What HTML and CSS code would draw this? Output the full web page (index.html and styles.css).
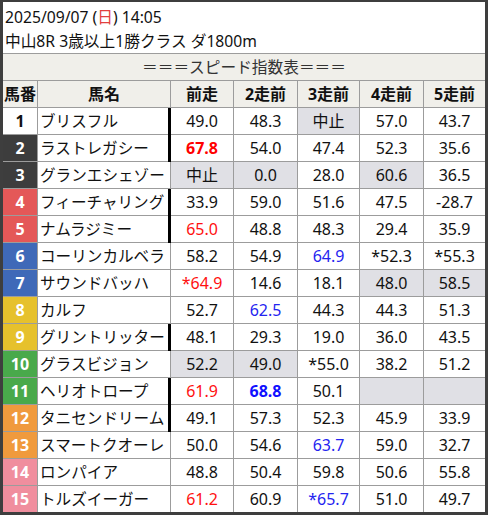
FILE: index.html
```html
<!DOCTYPE html>
<html lang="ja">
<head>
<meta charset="utf-8">
<link rel="stylesheet" href="styles.css">
</head>
<body>
<div class="frame">
  <div class="title">
    <div class="tline">2025/09/07 (<span class="sun">日</span>) 14:05</div>
    <div class="tline">中山8R 3歳以上1勝クラス ダ1800m</div>
  </div>
  <div class="grid">
    <div class="strip">＝＝＝スピード指数表＝＝＝</div>
    <div class="hd">馬番</div><div class="hd">馬名</div><div class="hd">前走</div><div class="hd">2走前</div><div class="hd">3走前</div><div class="hd">4走前</div><div class="hd">5走前</div>

    <div class="num w1">1</div><div class="name">ブリスフル</div><div class="c mark">49.0</div><div class="c">48.3</div><div class="c g">中止</div><div class="c">57.0</div><div class="c">43.7</div>
    <div class="num w2">2</div><div class="name">ラストレガシー</div><div class="c mark rb">67.8</div><div class="c">54.0</div><div class="c">47.4</div><div class="c">52.3</div><div class="c">35.6</div>
    <div class="num w2">3</div><div class="name">グランエシェゾー</div><div class="c g">中止</div><div class="c g">0.0</div><div class="c">28.0</div><div class="c g">60.6</div><div class="c">36.5</div>
    <div class="num w3">4</div><div class="name">フィーチャリング</div><div class="c mark">33.9</div><div class="c">59.0</div><div class="c">51.6</div><div class="c">47.5</div><div class="c">-28.7</div>
    <div class="num w3">5</div><div class="name">ナムラジミー</div><div class="c mark r">65.0</div><div class="c">48.8</div><div class="c">48.3</div><div class="c">29.4</div><div class="c">35.9</div>
    <div class="num w4">6</div><div class="name">コーリンカルベラ</div><div class="c">58.2</div><div class="c">54.9</div><div class="c b">64.9</div><div class="c">*52.3</div><div class="c">*55.3</div>
    <div class="num w4">7</div><div class="name">サウンドバッハ</div><div class="c r">*64.9</div><div class="c">14.6</div><div class="c">18.1</div><div class="c g">48.0</div><div class="c g">58.5</div>
    <div class="num w5">8</div><div class="name">カルフ</div><div class="c">52.7</div><div class="c b">62.5</div><div class="c">44.3</div><div class="c">44.3</div><div class="c">51.3</div>
    <div class="num w5">9</div><div class="name">グリントリッター</div><div class="c mark">48.1</div><div class="c">29.3</div><div class="c">19.0</div><div class="c">36.0</div><div class="c">43.5</div>
    <div class="num w6">10</div><div class="name">グラスビジョン</div><div class="c g">52.2</div><div class="c g">49.0</div><div class="c">*55.0</div><div class="c">38.2</div><div class="c">51.2</div>
    <div class="num w6">11</div><div class="name">ヘリオトロープ</div><div class="c mark r">61.9</div><div class="c bb">68.8</div><div class="c">50.1</div><div class="c g"></div><div class="c g"></div>
    <div class="num w7">12</div><div class="name">タニセンドリーム</div><div class="c mark">49.1</div><div class="c">57.3</div><div class="c">52.3</div><div class="c">45.9</div><div class="c">33.9</div>
    <div class="num w7">13</div><div class="name">スマートクオーレ</div><div class="c">50.0</div><div class="c">54.6</div><div class="c b">63.7</div><div class="c">59.0</div><div class="c">32.7</div>
    <div class="num w8">14</div><div class="name">ロンパイア</div><div class="c">48.8</div><div class="c">50.4</div><div class="c">59.8</div><div class="c">50.6</div><div class="c">55.8</div>
    <div class="num w8">15</div><div class="name">トルズイーガー</div><div class="c r">61.2</div><div class="c">60.9</div><div class="c b">*65.7</div><div class="c">51.0</div><div class="c">49.7</div>
  </div>
</div>
</body>
</html>
```
FILE: styles.css
```css
html, body {
  margin: 0;
  padding: 0;
  background: #ffffff;
}
body {
  font-family: "Noto Sans", "Noto Sans CJK JP", sans-serif;
  font-size: 16px;
  color: #111;
}
.frame {
  width: 482px;
  border-style: solid;
  border-color: #3e3e3e;
  border-width: 2px 3px 3px 3px;
  background: #fff;
}
.title {
  height: 51px;
  padding: 3px 0 0 2px;
  box-sizing: border-box;
  font-size: 15.7px;
}
.tline {
  height: 24px;
  line-height: 24px;
  white-space: nowrap;
}
.sun {
  color: #e2403f;
}
.grid {
  display: grid;
  grid-template-columns: 34px 132px 62px 63px 61px 63px 61px;
  grid-auto-rows: 26px;
  gap: 1px;
  padding-top: 1px;
  background: #9c9c9c;
}
.grid > div {
  background: #fff;
  line-height: 26px;
  white-space: nowrap;
}
.grid > .strip {
  grid-column: 1 / -1;
  background: #f0efea;
  text-align: center;
  color: #333;
  font-size: 15.7px;
}
.grid > .hd {
  background: #f0efea;
  font-weight: bold;
  text-align: center;
  color: #111;
}
.grid > .num {
  text-align: center;
  font-weight: bold;
  color: #fff;
}
.grid > .name {
  padding-left: 2px;
  overflow: hidden;
  font-size: 15.6px;
}
.c {
  text-align: center;
}
.grid > .g {
  background: #e0e0e5;
}
.mark {
  position: relative;
}
.mark::before {
  content: "";
  position: absolute;
  left: -3px;
  top: 0;
  bottom: -1px;
  width: 3px;
  background: #000;
}
.r { color: #ff1010; }
.rb { color: #ff0000; font-weight: bold; }
.b { color: #2424f0; }
.bb { color: #1010ff; font-weight: bold; }
.grid > .w1 { background: #fff; color: #111; }
.grid > .w2 { background: #3d3d3d; }
.grid > .w3 { background: #e45858; }
.grid > .w4 { background: #3f69b8; }
.grid > .w5 { background: #e6c12c; }
.grid > .w6 { background: #49a94b; }
.grid > .w7 { background: #f09a3d; }
.grid > .w8 { background: #f08e9e; }
```
